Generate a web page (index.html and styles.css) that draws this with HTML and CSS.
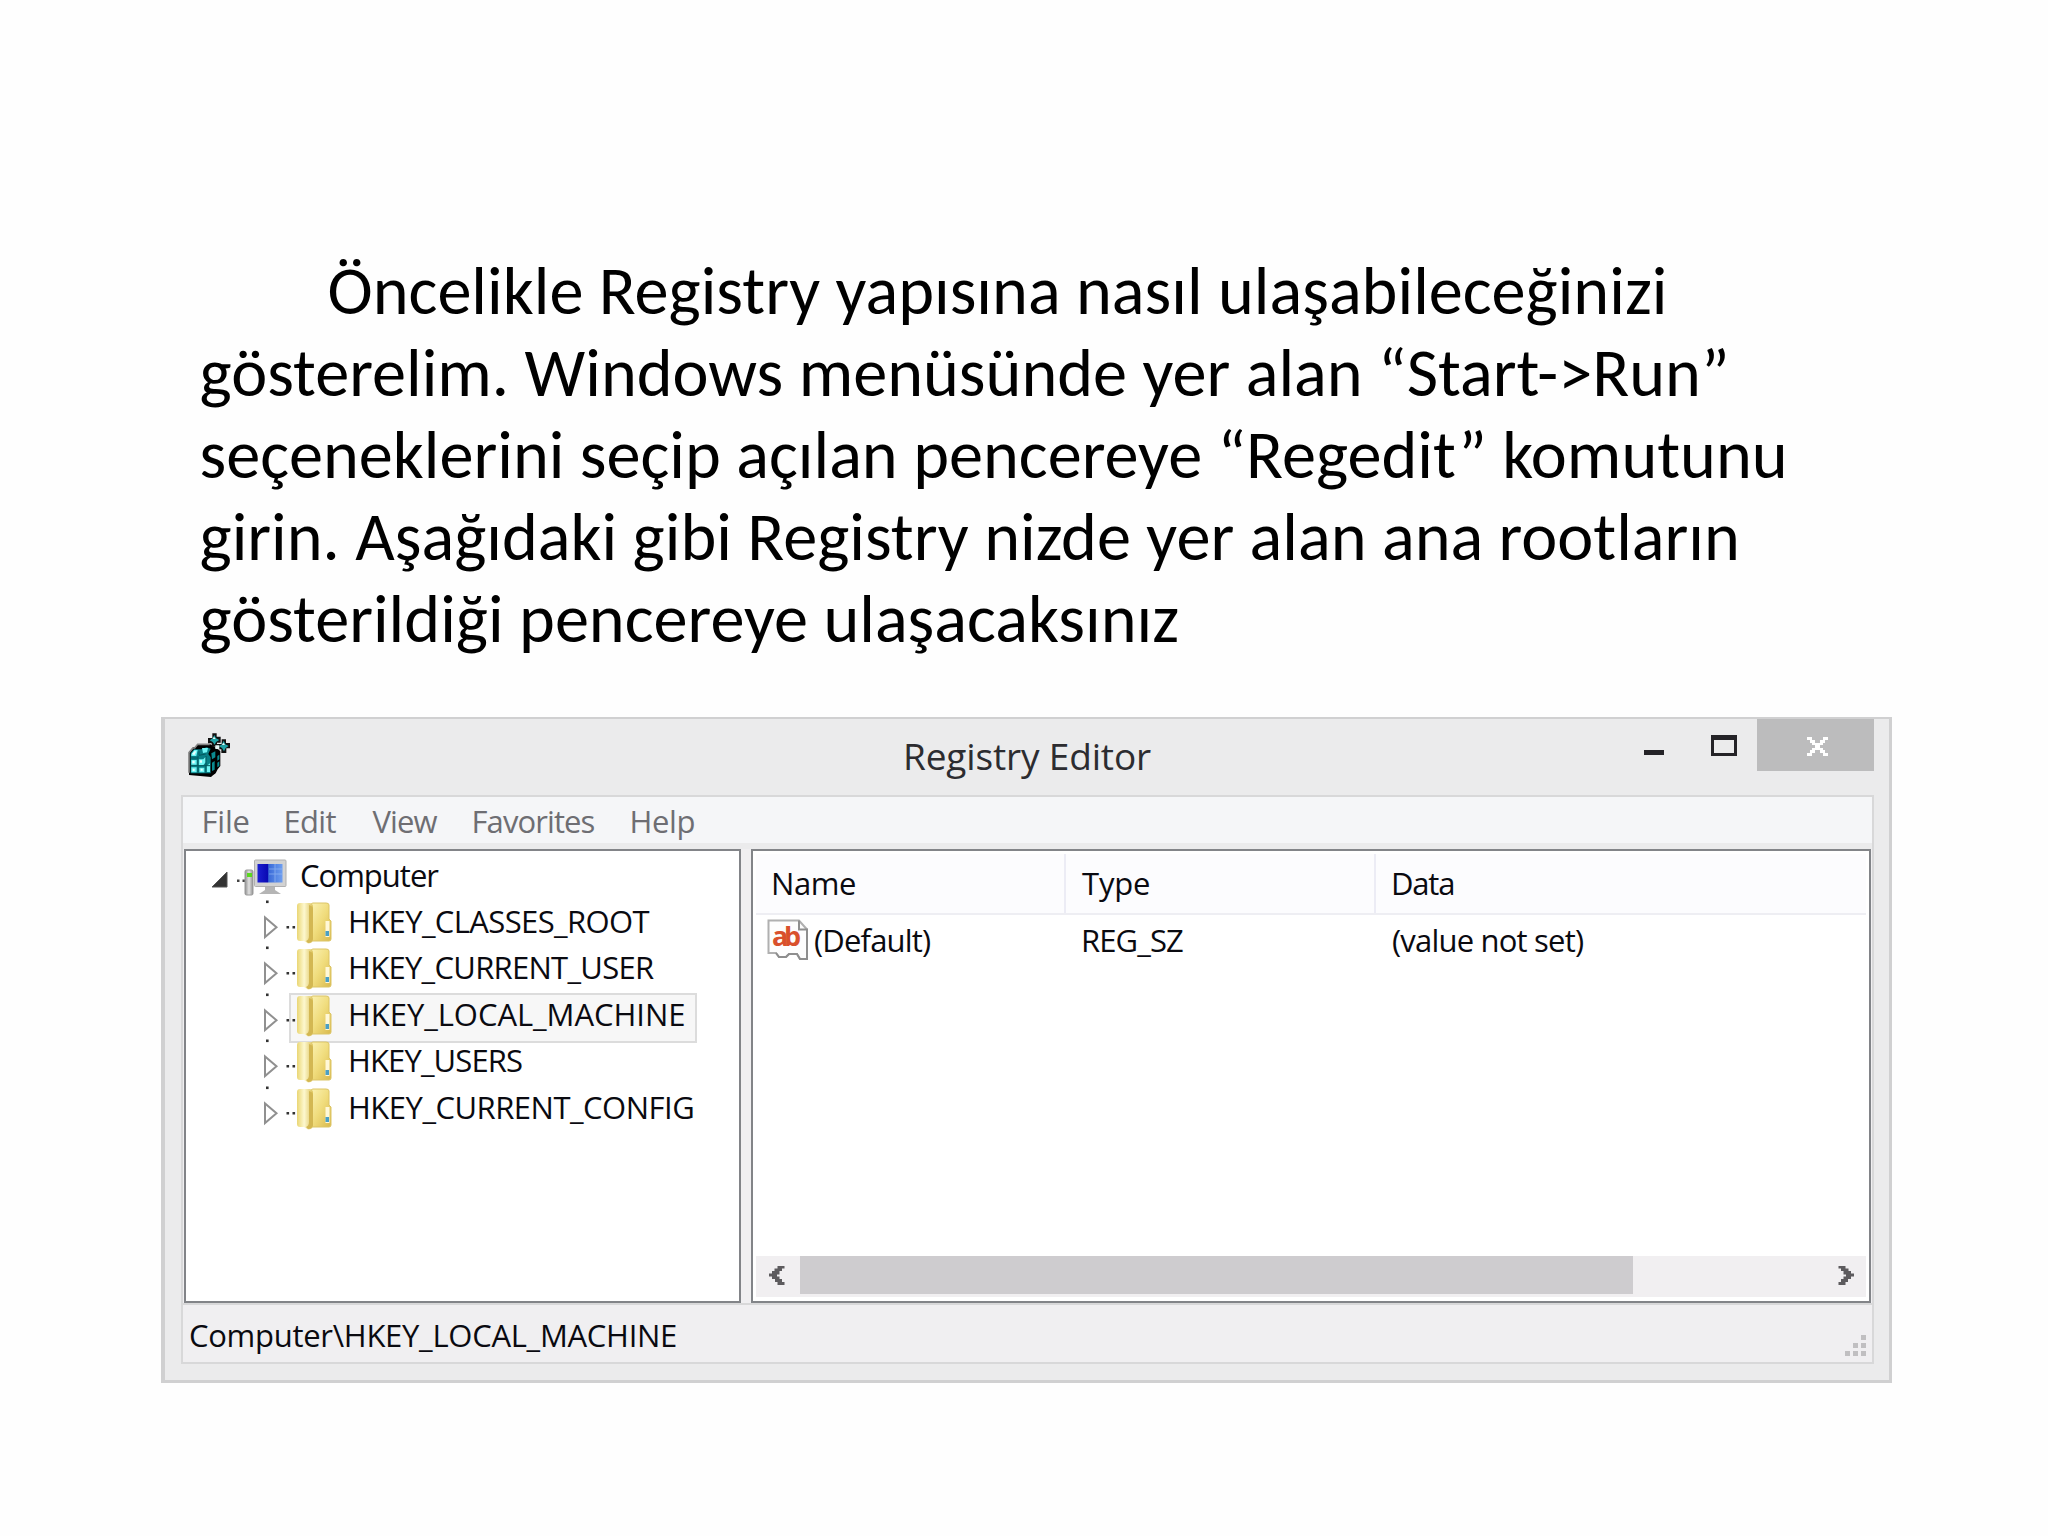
FILE: index.html
```html
<!DOCTYPE html>
<html lang="tr">
<head>
<meta charset="utf-8">
<title>Registry Editor</title>
<link rel="stylesheet" href="styles.css">
</head>
<body>
<svg class="defs" width="0" height="0" aria-hidden="true">
  <defs>
    <linearGradient id="gold" x1="0" x2="1" y1="0" y2="1"><stop offset="0" stop-color="#fbf2b4"/><stop offset=".5" stop-color="#f0dc7c"/><stop offset="1" stop-color="#d9b94c"/></linearGradient>
    <linearGradient id="flap" x1="0" x2="1"><stop offset="0" stop-color="#ead674"/><stop offset=".45" stop-color="#fdf8cf"/><stop offset="1" stop-color="#dcc25a"/></linearGradient>
    <linearGradient id="screen" x1="0" x2="1"><stop offset="0" stop-color="#1b1fd0"/><stop offset=".4" stop-color="#0a0ab4"/><stop offset=".45" stop-color="#3a6ad8"/><stop offset="1" stop-color="#6f9ff0"/></linearGradient>
    <linearGradient id="case" x1="0" x2="1"><stop offset="0" stop-color="#8f8f8f"/><stop offset=".5" stop-color="#e2e2e2"/><stop offset="1" stop-color="#909090"/></linearGradient>
    <g id="branch">
      <rect x="8" y="2.500" width="2.600" height="2.600" fill="#333"/>
      <path d="M7 19.500V39L18.500 29.300Z" fill="#fff" stroke="#909090" stroke-width="2"/>
      <path d="M28.500 28h2.600v2.600h-2.600zM34.500 28h2.600v2.600h-2.600z" fill="#333"/>
      <path d="M53 7q0-2 2-2h13q3 0 3 2v14l2 2v18q0 2-2 2H53z" fill="url(#gold)" stroke="#dcc566"/>
      <path d="M39 8q0-3 3-3h9q4 0 4 4v33q-1 3.500-5 3.500l-4-2.500h-4q-3 0-3-3z" fill="url(#flap)"/>
      <path d="M51 7q4 1 4 4v30q-1 4-5 4l-2-2q3-1 3-5z" fill="#d3b752"/>
      <rect x="67.500" y="23" width="4" height="16" fill="#fff8d8"/>
      <rect x="67.500" y="33" width="3.500" height="5" fill="#4a9fc4"/>
    </g>
  </defs>
</svg>

<main class="slide">
  <p class="copy">
    <span class="line first">Öncelikle Registry yapısına nasıl ulaşabileceğinizi</span>
    <span class="line">gösterelim. Windows menüsünde yer alan “Start-&gt;Run”</span>
    <span class="line">seçeneklerini seçip açılan pencereye “Regedit” komutunu</span>
    <span class="line">girin. Aşağıdaki gibi Registry nizde yer alan ana rootların</span>
    <span class="line">gösterildiği pencereye ulaşacaksınız</span>
  </p>

  <section class="window">
    <header class="titlebar">
      <svg class="app-icon" viewBox="0 0 150 150">
        <path d="M15 135V66l12-14h6l8-9h38l10 6 20 14v45l-8 10-6 12-8 6-6 5z" fill="#000"/>
        <path d="M15 128V68l12-14h5l9-11h36" fill="none" stroke="#858585" stroke-width="5"/>
        <path d="M20 130V70l10-12h22l16-6 12 4-7 16 7 10v48z" fill="#087f86"/>
        <path d="M22 72l9-12h10l-4 18H22zM22 90h16v14H22zM22 112h16v15H22zM44 88h14l7-8v17l-7 9H44zM46 113h15v14H46zM68 108l10-8v26H68zM54 54h18l-3 13-12 2z" fill="#6ff4f4"/>
        <path d="M24 72l7-8h6l-6 12zM25 92h7v8h-7zM26 116h6v7h-6zM48 91h6v7h-6zM50 116h6v6h-6z" fill="#e8ffff"/>
        <path d="M45 64v12l20-4M42 78v50M66 78v50M20 84h22M20 107h58" fill="none" stroke="#04585e" stroke-width="3"/>
        <path d="M82 70l12-6v18l-10 6zM84 98l8-5v26l-8 4zM100 78l6-4v14l-6 4zM100 98l6-4v14l-6 4z" fill="#0b8a90"/>
        <path d="M85 10h13v10h12v18H99v12H83V40H72V24h13z" fill="#111"/>
        <path d="M91 15l5 10 10 5-10 6-4 8-6-8-9-5 9-6z" fill="#1fa3a6"/>
        <path d="M113 28h13v11h12v16h-11v14h-15V58h-13V42h14z" fill="#111"/>
        <path d="M119 32l5 11 10 5-9 6-5 10-6-10-9-5 9-6z" fill="#1fa3a6"/>
        <path d="M90 20l5 7h-9zM118 38l5 7h-9zM94 46h12v11H94z" fill="#e4f6f4"/>
      </svg>
      <h1 class="title">Registry Editor</h1>
      <div class="controls">
        <svg class="glyph-min" viewBox="0 0 20 5"><rect width="20" height="5" fill="#242327"/></svg>
        <svg class="glyph-max" viewBox="0 0 26 21"><path fill-rule="evenodd" fill="#242327" d="M0 0h26v21H0zM3 5v13h20V5z"/></svg>
        <span class="close"><svg viewBox="0 0 8 7" shape-rendering="crispEdges"><path fill="#fff" d="M0 0h2v1h1v1h2V1h1V0h2v1H7v1H6v1H5v1h1v1h1v1h1v1H6V6H5V5H3v1H2v1H0V6h1V5h1V4h1V3H2V2H1V1H0z"/></svg></span>
      </div>
    </header>

    <div class="client">
      <nav class="menu">
        <span class="m-file">File</span><span class="m-edit">Edit</span><span class="m-view">View</span><span class="m-fav">Favorites</span><span class="m-help">Help</span>
      </nav>

      <div class="panes">
        <div class="tree">
          <div class="node root">
            <svg class="root-icon" viewBox="0 0 84 46.500">
              <path d="M5 36h15V21z" fill="#333" stroke="#555"/>
              <path d="M30 28.500h2.500v2.500H30zM35.500 28.500H38v2.500h-2.500z" fill="#444"/>
              <rect x="38" y="19" width="8" height="25" rx="1.500" fill="url(#case)" stroke="#999"/>
              <rect x="40" y="22" width="5" height="4" fill="#5bd820"/>
              <path d="M58 34h10v5l6 4H52l6-4z" fill="#b5b5b5"/>
              <rect x="47.500" y="9" width="31.500" height="26.500" rx="1" fill="#d2d2d2" stroke="#b0b0b0"/>
              <rect x="50.500" y="13" width="25" height="18.500" fill="url(#screen)"/>
              <path d="M62 18h13M62 23h13M68 13v18" stroke="#9fc0f5" stroke-width="1" opacity=".6"/>
            </svg>
            <span class="t-computer">Computer</span>
          </div>
          <div class="node"><svg viewBox="0 0 77 46.500"><use href="#branch"/></svg><span class="t-classes">HKEY_CLASSES_ROOT</span></div>
          <div class="node"><svg viewBox="0 0 77 46.500"><use href="#branch"/></svg><span class="t-user">HKEY_CURRENT_USER</span></div>
          <div class="node selected"><svg viewBox="0 0 77 46.500"><use href="#branch"/></svg><span class="t-local">HKEY_LOCAL_MACHINE</span></div>
          <div class="node"><svg viewBox="0 0 77 46.500"><use href="#branch"/></svg><span class="t-users">HKEY_USERS</span></div>
          <div class="node"><svg viewBox="0 0 77 46.500"><use href="#branch"/></svg><span class="t-config">HKEY_CURRENT_CONFIG</span></div>
        </div>

        <div class="list">
          <div class="head">
            <span class="c-name">Name</span><span class="c-type">Type</span><span class="c-data">Data</span>
          </div>
          <div class="row">
            <span class="cell"><svg class="value-icon" viewBox="0 0 42 42">
              <path d="M1.500 1.500H32l8 9V40h-7l-3-5h-8l-3 3h-7l-3-4H1.500z" fill="#fdfdfd" stroke="#b0b0b0" stroke-width="2"/>
              <path d="M32 1.500v9h8V40h-7l-3-5h-8l-3 3h-7l-3-4" fill="none" stroke="#8e8e8e" stroke-width="2"/>
              <text class="ab" x="5" y="26.500" textLength="29">ab</text>
            </svg><span class="v-name">(Default)</span></span>
            <span class="cell v-type">REG_SZ</span>
            <span class="cell v-data">(value not set)</span>
          </div>
          <div class="scroll">
            <svg class="arrow" viewBox="0 0 16 19"><path d="M15.500 0H8.500v2.500H5.500V5H3v2.500H0v3h3V13h3v3h2.500v3h7v-3h-2.500v-3h-2.500v-2.500H8v-2h2.500V5H13V2.500h2.500z" fill="#5d5b5e"/></svg>
            <div class="thumb"></div>
            <svg class="arrow" viewBox="0 0 16 19"><path transform="matrix(-1 0 0 1 16 0)" d="M15.500 0H8.500v2.500H5.500V5H3v2.500H0v3h3V13h3v3h2.500v3h7v-3h-2.500v-3h-2.500v-2.500H8v-2h2.500V5H13V2.500h2.500z" fill="#5d5b5e"/></svg>
          </div>
        </div>
      </div>

      <footer class="status">
        <span>Computer\HKEY_LOCAL_MACHINE</span>
        <svg class="grip" viewBox="0 0 21 21"><path d="M16 0h5v5h-5zM8 8h5v5H8zM16 8h5v5h-5zM0 16h5v5H0zM8 16h5v5H8zM16 16h5v5h-5z" fill="#c0bfc1"/></svg>
      </footer>
    </div>
  </section>
</main>
</body>
</html>
```
FILE: styles.css
```css
* { box-sizing: border-box; }
body { margin: 0; background: #fefefe; }
svg { display: block; flex: none; }
.defs { position: absolute; }

.slide { width: 2048px; height: 1536px; padding: 250px 0 0 161px; overflow: hidden; }

.copy {
  margin: 0 0 56px;
  padding-left: 38.5px;
  height: 411px;
  font: 68.27px/82.1px Carlito, Calibri, Lato, sans-serif;
  color: #000;
}
.line { display: block; white-space: nowrap; }
.first { padding-left: 128px; }

.window {
  width: 1731px;
  height: 666px;
  border: solid #d0d0d1;
  border-width: 2px 3px 3px 4px;
  background: #ebebec;
  padding: 0 15px 16px 16px;
  font: 31px/42px "Open Sans", "Noto Sans", sans-serif;
  color: #0a0a10;
  white-space: nowrap;
  display: flex;
  flex-direction: column;
}

.titlebar { height: 76px; display: flex; align-items: flex-start; }
.app-icon { width: 50px; height: 50px; margin: 11px 0 0 3px; }
.title { margin: 12px 0 0 669px; font-size: 37px; line-height: 50px; font-weight: 400; letter-spacing: -.15px; color: #2c2c30; }
.controls { margin-left: auto; display: flex; }
.glyph-min { width: 20px; height: 5px; margin: 31px 47px 0 0; }
.glyph-max { width: 26px; height: 21px; margin: 16px 20px 0 0; }
.close { width: 117px; height: 52px; background: #bcbcbd; display: flex; align-items: center; justify-content: center; padding: 2px 0 0 3px; }
.close svg { width: 21px; height: 19px; }

.client { flex: 1; border: 2px solid #d8d8d9; background: #ebebec; display: flex; flex-direction: column; }
.menu { height: 46px; background: #f5f6f8; display: flex; padding: 3px 0 0 18.5px; color: #6e6e73; }
.m-file { width: 82px; letter-spacing: -.22px; }
.m-edit { width: 89px; letter-spacing: -.67px; }
.m-view { width: 99px; letter-spacing: -.9px; }
.m-fav { width: 158px; letter-spacing: -.91px; }
.m-help { letter-spacing: -.36px; }

.panes { margin-top: 6px; height: 454px; padding: 0 1px; display: flex; gap: 10px; background: #f0eff1; }
.tree, .list { border: 2px solid #828488; background: #fff; }
.tree { width: 557px; padding-left: 72px; }
.list { width: 1120px; display: flex; flex-direction: column; padding: 0 3px 4px; }

.node { position: relative; height: 46.5px; display: flex; align-items: center; }
.node svg { width: 77px; height: 46.5px; margin-right: 13px; position: relative; }
.node span { position: relative; }
.root { margin-left: -51px; }
.node .root-icon { width: 84px; margin-right: 9px; }
.root span { padding-top: 2px; }
.selected::before { content: ""; position: absolute; left: 31px; top: 2px; width: 404px; height: 46px; background: #f7f7f7; border: 2px solid #dcdcdc; }
.t-computer { letter-spacing: -1px; }
.t-classes { letter-spacing: -.62px; }
.t-user { letter-spacing: -.71px; }
.t-local { letter-spacing: -.05px; }
.t-users { letter-spacing: -.88px; }
.t-config { letter-spacing: -.5px; }

.head { height: 64px; padding: 3px 0 0; border-bottom: 2px solid #eeeef3; background: linear-gradient(#fff 3px, #fcfcfe 3px); display: flex; }
.head span { padding: 8px 0 0 15px; }
.c-name { width: 310px; border-right: 2px solid #ececf5; letter-spacing: -.42px; }
.head .c-type { width: 310px; padding-left: 16px; border-right: 2px solid #ececf5; letter-spacing: -.19px; }
.c-data { letter-spacing: -1.2px; }
.row { height: 48px; display: flex; align-items: center; padding-top: 1px; }
.cell { width: 310px; padding-left: 15px; display: flex; align-items: center; }
.cell:first-child { padding-left: 11px; }
.value-icon { width: 42px; height: 42px; margin-right: 5px; overflow: visible; }
.ab { font: 700 27px "Open Sans", sans-serif; fill: #d9502c; }
.v-name { letter-spacing: -.82px; }
.v-type { letter-spacing: -.89px; }
.v-data { padding-left: 16px; letter-spacing: -.8px; }
.scroll { margin-top: auto; width: 1110px; height: 41px; background: #f1eff1; display: flex; padding-left: 13px; }
.arrow { width: 16px; height: 19px; margin-top: 10px; }
.thumb { width: 833px; height: 38px; margin: 0 205px 0 15px; background: #cecccf; }

.status { flex: 1; border-top: 2px solid #d8d8d9; background: #f0eff1; display: flex; justify-content: space-between; padding: 9px 6px 0; letter-spacing: -.28px; }
.grip { width: 21px; height: 21px; margin-top: 21px; }
```
